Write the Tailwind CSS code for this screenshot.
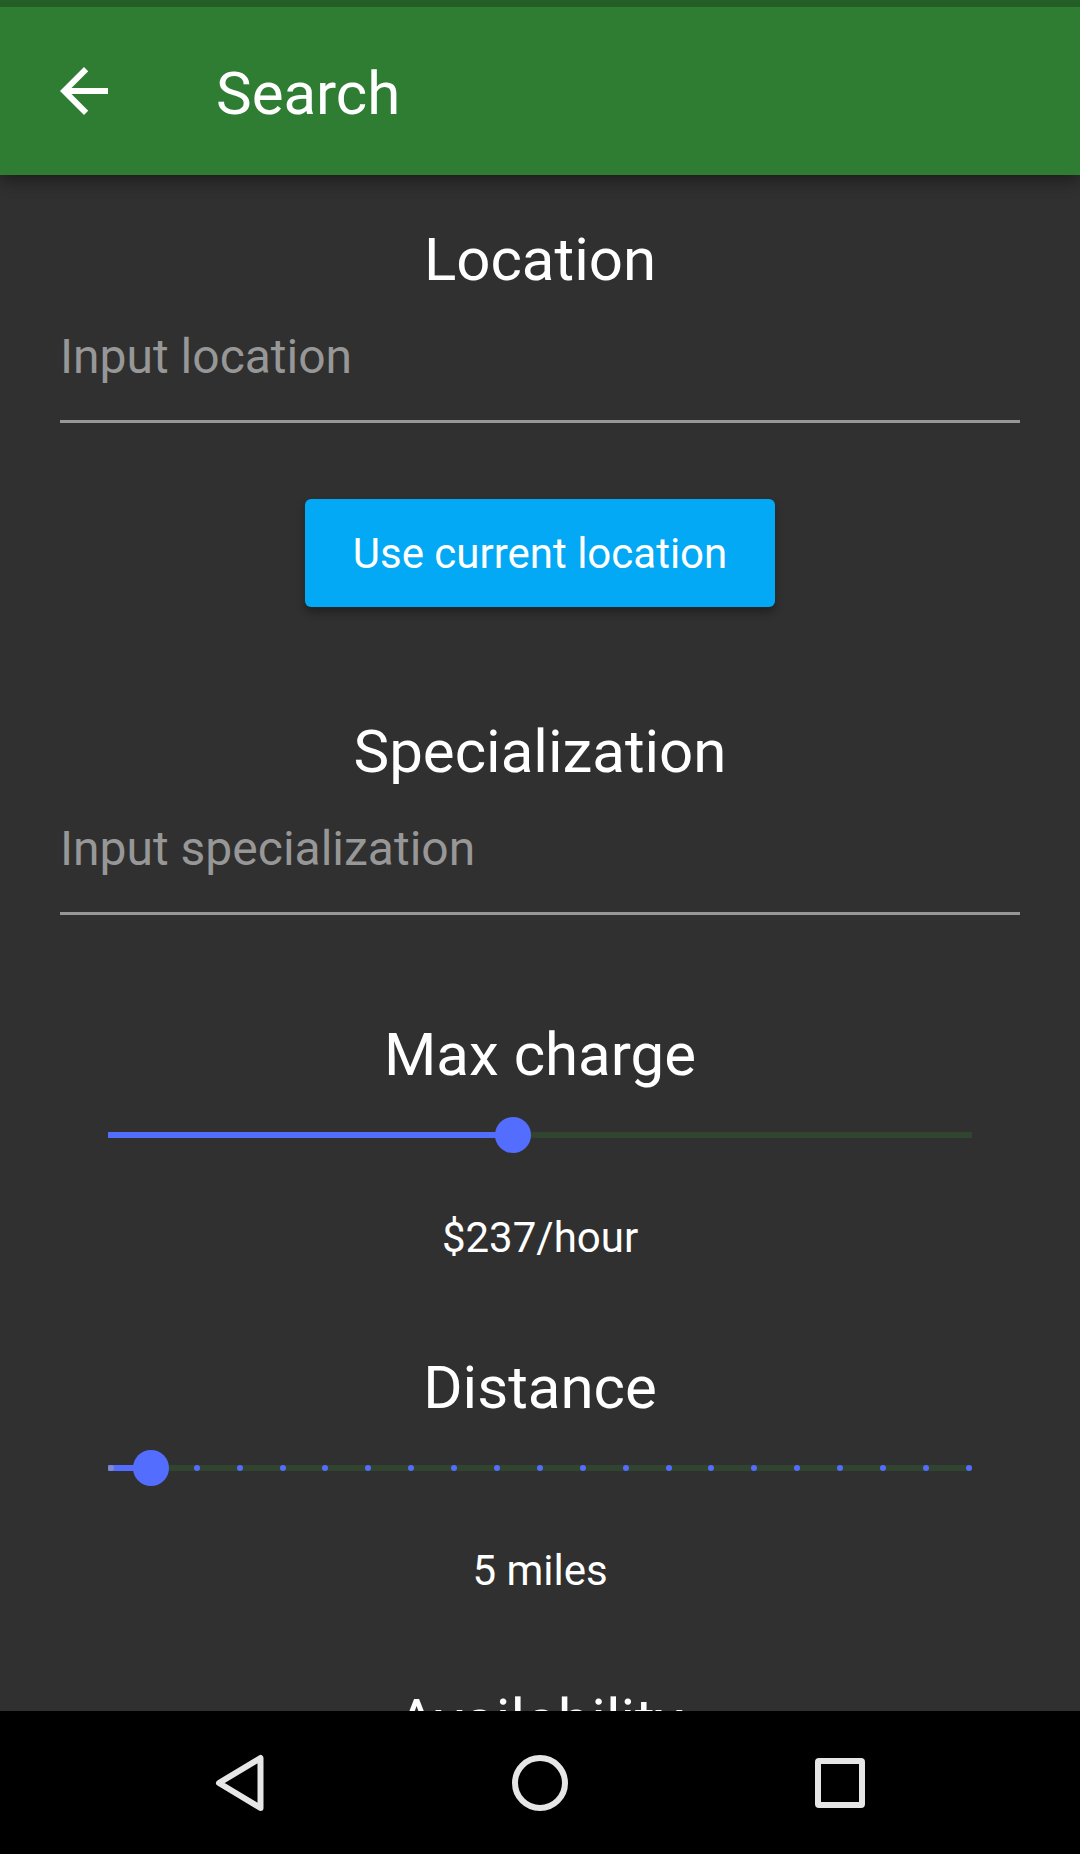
<!DOCTYPE html>
<html lang="en">
<head>
<meta charset="utf-8">
<meta name="viewport" content="width=device-width, initial-scale=1">
<title>Search</title>
<script src="https://cdn.jsdelivr.net/npm/@tailwindcss/browser@4"></script>
</head>
<body class="flex h-screen flex-col overflow-hidden bg-[#303030] font-[Roboto,sans-serif] text-white">

<header class="relative z-10 flex shrink-0 items-center border-t-[7px] border-[#235e27] bg-[#2e7d32] py-[45px] pl-12 shadow-[0_6px_15px_rgba(0,0,0,0.4)]">
  <button type="button" aria-label="Back" class="mr-24 size-[72px] shrink-0">
    <svg viewBox="0 0 24 24" class="size-[72px] fill-white" aria-hidden="true"><path d="M20 11H7.830l5.590-5.590L12 4l-8 8 8 8 1.410-1.410L7.830 13H20v-2z"/></svg>
  </button>
  <h1 class="pt-[6px] text-[60px] leading-[72px]">Search</h1>
</header>

<main class="min-h-0 flex-1 overflow-hidden px-[60px] pt-[49px]">
  <section class="flex flex-col items-center">
    <h2 class="text-[60px] leading-[72px]"><label for="location">Location</label></h2>
    <input id="location" type="text" placeholder="Input location" class="w-full border-b-[3px] border-[#979797] bg-transparent pt-[33px] pb-[35px] text-[48px] leading-[56px] outline-none placeholder:text-[#979797]">
    <button type="button" class="mt-[76px] rounded-md bg-[#03a9f4] px-12 pt-[31px] pb-[29px] text-[42px] leading-[48px] shadow-[0_6px_9px_rgba(0,0,0,0.3)]">Use current location</button>
  </section>

  <section class="mt-[109px] flex flex-col items-center">
    <h2 class="text-[60px] leading-[72px]"><label for="specialization">Specialization</label></h2>
    <input id="specialization" type="text" placeholder="Input specialization" class="w-full border-b-[3px] border-[#979797] bg-transparent pt-[33px] pb-[35px] text-[48px] leading-[56px] outline-none placeholder:text-[#979797]">
  </section>

  <section class="mt-[104px] flex flex-col items-center">
    <h2 class="text-[60px] leading-[72px]"><label for="charge">Max charge</label></h2>
    <div class="grid w-full items-center px-[30px]">
      <div class="col-start-1 row-start-1 mx-[18px] h-[6px] bg-[#304430]">
        <div class="h-full bg-[#536dfe]" style="width:46.87%"></div>
      </div>
      <input id="charge" type="range" min="5" max="500" value="237" class="z-10 col-start-1 row-start-1 h-[88px] w-full appearance-none bg-transparent [&::-webkit-slider-thumb]:size-9 [&::-webkit-slider-thumb]:appearance-none [&::-webkit-slider-thumb]:rounded-full [&::-webkit-slider-thumb]:bg-[#536dfe]">
    </div>
    <output for="charge" class="mt-[35px] text-[42px] leading-[48px]">$237/hour</output>
  </section>

  <section class="mt-[90px] flex flex-col items-center">
    <h2 class="text-[60px] leading-[72px]"><label for="distance">Distance</label></h2>
    <div class="grid w-full items-center px-[30px]">
      <div class="col-start-1 row-start-1 mx-[18px] h-[6px] bg-[#304430]">
        <div class="h-full bg-[#536dfe]" style="width:5%"></div>
      </div>
      <!-- One tick for every 5 miles -->
      <div class="col-start-1 row-start-1 mx-[18px] flex justify-between" aria-hidden="true">
        <i class="size-[6px] rounded-full bg-[#8189cb]"></i>
        <i class="size-[6px] rounded-full bg-[#536dfe]"></i>
        <i class="size-[6px] rounded-full bg-[#536dfe]"></i>
        <i class="size-[6px] rounded-full bg-[#536dfe]"></i>
        <i class="size-[6px] rounded-full bg-[#536dfe]"></i>
        <i class="size-[6px] rounded-full bg-[#536dfe]"></i>
        <i class="size-[6px] rounded-full bg-[#536dfe]"></i>
        <i class="size-[6px] rounded-full bg-[#536dfe]"></i>
        <i class="size-[6px] rounded-full bg-[#536dfe]"></i>
        <i class="size-[6px] rounded-full bg-[#536dfe]"></i>
        <i class="size-[6px] rounded-full bg-[#536dfe]"></i>
        <i class="size-[6px] rounded-full bg-[#536dfe]"></i>
        <i class="size-[6px] rounded-full bg-[#536dfe]"></i>
        <i class="size-[6px] rounded-full bg-[#536dfe]"></i>
        <i class="size-[6px] rounded-full bg-[#536dfe]"></i>
        <i class="size-[6px] rounded-full bg-[#536dfe]"></i>
        <i class="size-[6px] rounded-full bg-[#536dfe]"></i>
        <i class="size-[6px] rounded-full bg-[#536dfe]"></i>
        <i class="size-[6px] rounded-full bg-[#536dfe]"></i>
        <i class="size-[6px] rounded-full bg-[#536dfe]"></i>
        <i class="size-[6px] rounded-full bg-[#536dfe]"></i>
      </div>
      <input id="distance" type="range" min="0" max="100" step="5" value="5" class="z-10 col-start-1 row-start-1 h-[88px] w-full appearance-none bg-transparent [&::-webkit-slider-thumb]:size-9 [&::-webkit-slider-thumb]:appearance-none [&::-webkit-slider-thumb]:rounded-full [&::-webkit-slider-thumb]:bg-[#536dfe]">
    </div>
    <output for="distance" class="mt-[35px] text-[42px] leading-[48px]">5 miles</output>
  </section>

  <section class="mt-[90px] flex flex-col items-center">
    <h2 class="text-[60px] leading-[72px]">Availability</h2>
  </section>
</main>

<nav aria-label="System" class="z-10 flex h-[143px] shrink-0 items-center justify-center gap-[216px] bg-black">
  <button type="button" aria-label="Back" class="size-[84px]">
    <svg viewBox="0 0 84 84" class="size-[84px] fill-none stroke-[#e6e6e6] stroke-6" stroke-linejoin="round" aria-hidden="true"><path d="M62.500 17V67L21 42z"/></svg>
  </button>
  <button type="button" aria-label="Home" class="size-[84px]">
    <svg viewBox="0 0 84 84" class="size-[84px] fill-none stroke-[#e6e6e6] stroke-6" aria-hidden="true"><circle cx="42" cy="42" r="25"/></svg>
  </button>
  <button type="button" aria-label="Recent apps" class="size-[84px]">
    <svg viewBox="0 0 84 84" class="size-[84px] fill-none stroke-[#e6e6e6] stroke-6" stroke-linejoin="round" aria-hidden="true"><rect x="20" y="20" width="44" height="44" rx="1"/></svg>
  </button>
</nav>

</body>
</html>
